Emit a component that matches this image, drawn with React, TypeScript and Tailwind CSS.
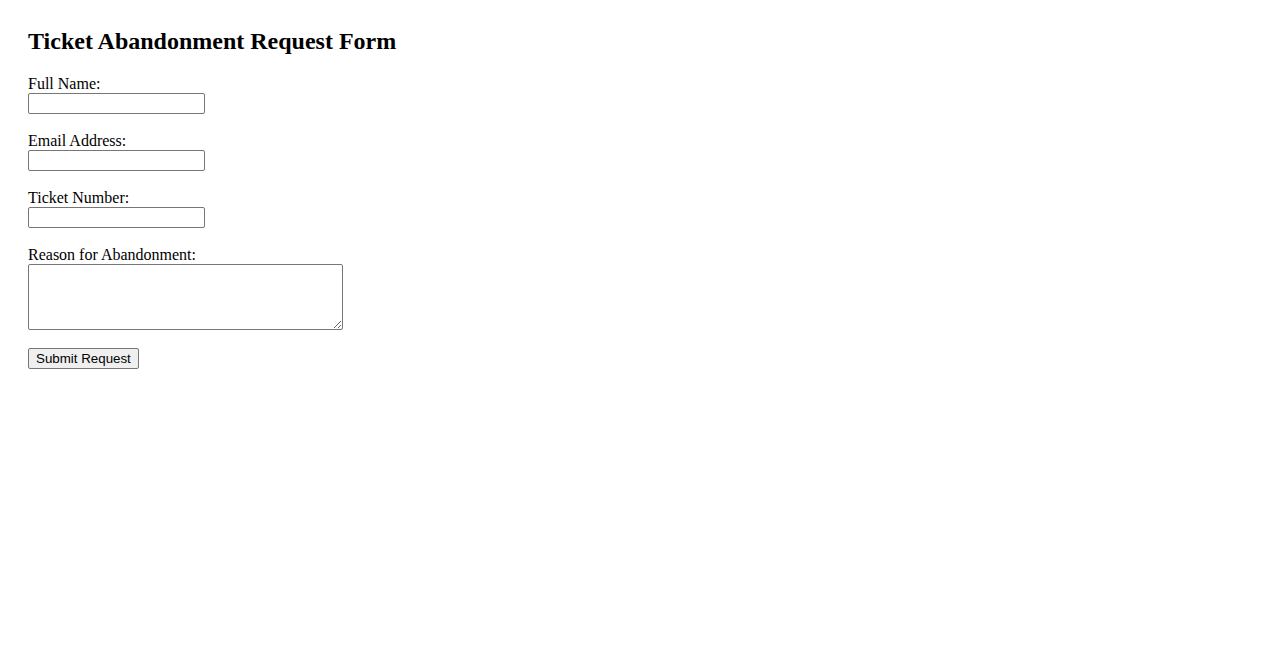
import React from "react";

const fields = [
  { id: "fullName", label: "Full Name:", type: "text" },
  { id: "email", label: "Email Address:", type: "email" },
  { id: "ticket", label: "Ticket Number:", type: "text" },
];

export default function App() {
  return (
    <div className="min-h-[650px] bg-white pl-[28px] pt-[27px] font-['Liberation_Serif',serif] text-[16px] text-black">
      <h2 className="text-[24px] font-bold leading-[28px]">
        Ticket Abandonment Request Form
      </h2>
      <form className="mt-[19px] flex flex-col items-start" onSubmit={(e) => e.preventDefault()}>
        {fields.map((f) => (
          <div key={f.id} className="mb-[17px] flex flex-col items-start">
            <label htmlFor={f.id} className="pt-[1px] leading-[18px]">
              {f.label}
            </label>
            <input
              id={f.id}
              type={f.type}
              className="h-[21px] w-[177px] rounded-[2px] border border-[#767676] bg-white px-[2px] text-[13.333px] font-['Liberation_Sans',sans-serif]"
            />
          </div>
        ))}
        <div className="mb-[18px] flex flex-col items-start">
          <label htmlFor="reason" className="pt-[1px] leading-[18px]">
            Reason for Abandonment:
          </label>
          <textarea
            id="reason"
            className="h-[66px] w-[315px] rounded-[2px] border border-[#767676] bg-white px-[2px] font-['Liberation_Mono',monospace] text-[13.333px]"
          />
        </div>
        <button
          type="submit"
          className="h-[21px] rounded-[2px] border border-[#767676] bg-[#efefef] px-[7px] font-['Liberation_Sans',sans-serif] text-[13.333px] leading-[17px] text-black"
        >
          Submit Request
        </button>
      </form>
    </div>
  );
}
